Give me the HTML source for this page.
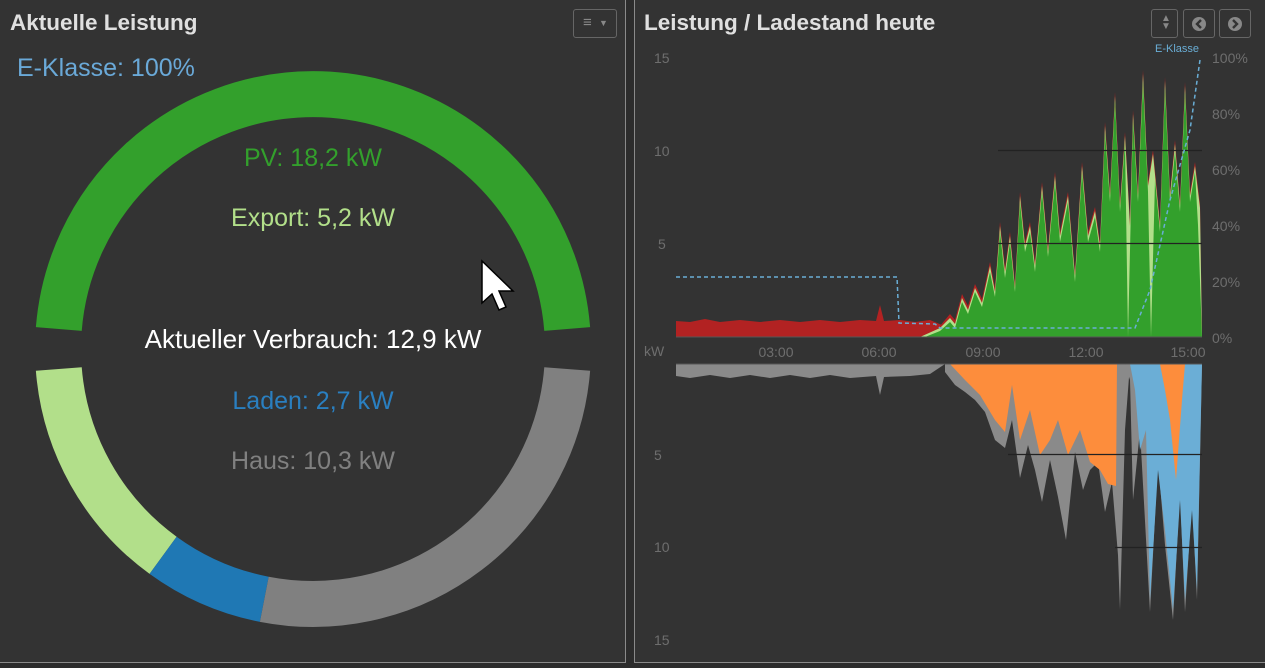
<!DOCTYPE html>
<html><head><meta charset="utf-8">
<style>
html,body{margin:0;padding:0;background:#2c2c2c;width:1265px;height:668px;overflow:hidden;font-family:"Liberation Sans",sans-serif;}
.p{position:absolute;background:#333;border:1px solid #8a8a8a;box-sizing:border-box;}
.t{position:absolute;color:#e0e0e0;font-weight:bold;font-size:22.5px;}
.btn{position:absolute;border:1px solid #666;border-radius:3px;box-sizing:border-box;}
</style></head><body>
<div class="p" style="left:-1px;top:-2px;width:627px;height:665px"></div>
<div class="p" style="left:634px;top:-2px;width:633px;height:665px"></div>
<div class="t" style="left:10px;top:10px">Aktuelle Leistung</div>
<div class="t" style="left:644px;top:10px">Leistung / Ladestand heute</div>
<div class="btn" style="left:573px;top:9px;width:44px;height:29px"><span style="position:absolute;left:9px;top:4px;color:#888;font-size:15px">≡</span><span style="position:absolute;left:25px;top:8px;color:#888;font-size:9px">▼</span></div>
<div class="btn" style="left:1151px;top:9px;width:27px;height:29px"><span style="position:absolute;left:9px;top:5px;color:#888;font-size:10px;line-height:8px">▲<br>▼</span></div>
<div class="btn" style="left:1183px;top:9px;width:32px;height:29px"><svg width="30" height="27" style="position:absolute;left:0;top:0"><circle cx="15" cy="14" r="7" fill="#888"/><path d="M17 10 L13 14 L17 18" stroke="#333" stroke-width="2.4" fill="none"/></svg></div>
<div class="btn" style="left:1219px;top:9px;width:32px;height:29px"><svg width="30" height="27" style="position:absolute;left:0;top:0"><circle cx="15" cy="14" r="7" fill="#888"/><path d="M13 10 L17 14 L13 18" stroke="#333" stroke-width="2.4" fill="none"/></svg></div>

<svg width="1265" height="668" style="position:absolute;left:0;top:0" font-family="Liberation Sans, sans-serif">
<g fill="none" stroke-width="46">
<path d="M58.8,329 A255,255 0 0 1 567.2,329" stroke="#33a02c"/>
<path d="M58.8,369 A255,255 0 0 0 163.1,555.3" stroke="#b2df8a"/>
<path d="M163.1,555.3 A255,255 0 0 0 264.3,599.3" stroke="#1f78b4"/>
<path d="M264.3,599.3 A255,255 0 0 0 567.2,369" stroke="#808080"/>
</g>
<g font-size="25" text-anchor="middle">
<text x="17" y="76" text-anchor="start" fill="#6aa9d8">E-Klasse: 100%</text>
<text x="313" y="166" fill="#33a02c">PV: 18,2 kW</text>
<text x="313" y="226" fill="#b2df8a">Export: 5,2 kW</text>
<text x="313" y="348" fill="#ffffff" font-size="26">Aktueller Verbrauch: 12,9 kW</text>
<text x="313" y="409" fill="#2a7fc0">Laden: 2,7 kW</text>
<text x="313" y="469" fill="#808080">Haus: 10,3 kW</text>
</g>
<path d="M482,261 L482,303 L492,294 L499,310 L506,307 L499,291 L513,291 Z" fill="#fff" stroke="#000" stroke-width="1.5"/>

<g font-size="14" fill="#6e6e6e">
<text x="654" y="63">15</text><text x="654" y="156">10</text><text x="658" y="249">5</text>
<text x="1212" y="63">100%</text><text x="1212" y="119">80%</text><text x="1212" y="175">60%</text><text x="1212" y="231">40%</text><text x="1212" y="287">20%</text><text x="1212" y="343">0%</text>
<text x="644" y="356">kW</text>
<text x="776" y="357" text-anchor="middle">03:00</text><text x="879" y="357" text-anchor="middle">06:00</text><text x="983" y="357" text-anchor="middle">09:00</text><text x="1086" y="357" text-anchor="middle">12:00</text><text x="1188" y="357" text-anchor="middle">15:00</text>
<text x="654" y="460">5</text><text x="654" y="552">10</text><text x="654" y="645">15</text>
</g>
<path d="M676,337 L676,321 L690,322 L705,319 L720,322 L740,320 L760,322 L780,320 L800,322 L820,320 L840,322 L860,320 L876,321 L880,305 L884,321 L900,320 L915,322 L930,320 L942,325 L945,337 Z" fill="#b22222"/>
<path d="M920,337 L940,326 L950,314 L955,320 L962,294 L968,306 L975,284 L982,299 L990,262 L995,288 L1000,222 L1005,268 L1010,232 L1015,284 L1020,192 L1025,242 L1030,222 L1035,262 L1042,182 L1048,248 L1055,172 L1060,232 L1068,192 L1075,272 L1082,162 L1088,232 L1095,207 L1100,242 L1105,122 L1110,192 L1115,92 L1120,202 L1125,132 L1130,222 L1133,110 L1138,192 L1143,70 L1148,182 L1153,150 L1160,222 L1165,77 L1170,192 L1175,140 L1180,202 L1185,82 L1190,192 L1195,162 L1200,204 L1202,337 Z" fill="#b22222"/>
<path d="M920,337 L940,328 L950,318 L955,324 L962,298 L968,310 L975,288 L982,303 L990,266 L995,292 L1000,226 L1005,272 L1010,236 L1015,288 L1020,196 L1025,246 L1030,226 L1035,266 L1042,186 L1048,252 L1055,176 L1060,236 L1068,196 L1075,276 L1082,166 L1088,236 L1095,211 L1100,246 L1105,126 L1110,196 L1115,96 L1120,206 L1125,136 L1130,226 L1133,114 L1138,196 L1143,74 L1148,186 L1153,154 L1160,226 L1165,81 L1170,196 L1175,144 L1180,206 L1185,86 L1190,196 L1195,166 L1200,208 L1202,337 Z" fill="#b2df8a"/>
<path d="M925,337 L940,331 L950,322 L955,328 L962,302 L968,314 L975,292 L982,307 L990,272 L995,297 L1000,232 L1005,278 L1010,242 L1015,292 L1020,202 L1025,252 L1030,232 L1035,272 L1042,192 L1048,257 L1055,182 L1060,242 L1068,202 L1075,282 L1082,172 L1088,242 L1095,217 L1100,252 L1105,132 L1110,202 L1115,100 L1120,212 L1125,142 L1128,337 L1133,120 L1138,202 L1143,82 L1148,192 L1151,337 L1155,180 L1160,232 L1165,88 L1170,202 L1175,152 L1180,212 L1185,92 L1190,202 L1195,172 L1198,225 L1202,337 Z" fill="#33a02c"/>
<g stroke="#222" stroke-width="1.2"><line x1="998" y1="150.5" x2="1202" y2="150.5"/><line x1="998" y1="243.5" x2="1202" y2="243.5"/></g>
<line x1="676" y1="337" x2="1202" y2="337" stroke="#555"/>
<path d="M676,277 L897,277 L899,323 L935,324 L940,328 L1135,328 L1150,290 L1170,200 L1190,130 L1200,60" fill="none" stroke="#6aaed6" stroke-width="1.5" stroke-dasharray="4,3"/>
<text x="1177" y="52" font-size="11" fill="#6aaed6" text-anchor="middle">E-Klasse</text>

<path d="M676,364 L676,376 L690,378 L710,375 L730,378 L750,375 L770,378 L790,375 L810,378 L830,375 L850,378 L876,376 L880,395 L884,377 L910,376 L930,374 L945,364 Z" fill="#8a8a8a"/>
<path d="M945,364 L945,372 L955,385 L965,392 L975,400 L985,412 L995,440 L1005,448 L1012,420 L1020,478 L1028,445 L1035,470 L1042,502 L1050,460 L1058,497 L1066,540 L1075,452 L1083,490 L1090,470 L1098,462 L1105,512 L1112,482 L1118,555 L1120,610 L1125,430 L1130,364 Z" fill="#8a8a8a"/>
<path d="M950,364 L965,380 L980,395 L995,420 L1005,432 L1012,385 L1020,440 L1030,410 L1040,455 L1050,440 L1058,420 L1068,455 L1080,430 L1090,462 L1100,470 L1108,484 L1116,486 L1117,364 Z" fill="#fd8d3c"/>
<path d="M1125,364 L1130,380 L1133,500 L1140,430 L1150,612 L1158,460 L1165,545 L1173,620 L1180,492 L1185,612 L1192,500 L1197,600 L1202,364 Z" fill="#8a8a8a"/>
<path d="M1130,364 L1135,390 L1140,450 L1146,430 L1150,600 L1158,470 L1165,530 L1173,610 L1180,500 L1185,600 L1192,510 L1197,590 L1202,364 Z" fill="#6baed6"/>
<path d="M1160,364 L1165,390 L1170,420 L1176,480 L1182,400 L1185,364 Z" fill="#fd8d3c"/>
<g stroke="#222" stroke-width="1.2"><line x1="1008" y1="454.5" x2="1202" y2="454.5"/><line x1="1115" y1="547.5" x2="1202" y2="547.5"/></g>
<line x1="676" y1="364" x2="1202" y2="364" stroke="#555"/>
</svg>
</body></html>
